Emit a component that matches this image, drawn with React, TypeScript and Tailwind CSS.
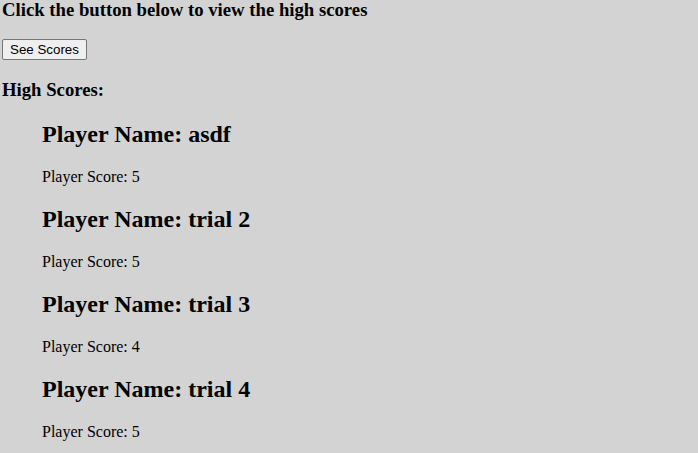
const players = [
  { name: "asdf", score: 5 },
  { name: "trial 2", score: 5 },
  { name: "trial 3", score: 4 },
  { name: "trial 4", score: 5 },
]

export default function App() {
  return (
    <div className="min-h-screen bg-[#d3d3d3] pl-[2px] font-['Liberation_Serif',serif] text-black flow-root">
      <h3 className="-mt-px mb-[15.7px] text-[18.72px] font-bold leading-[normal]">
        Click the button below to view the high scores
      </h3>
      <button className="h-[21px] rounded-[2px] border border-[#767676] bg-[#efefef] px-[7px] font-['Liberation_Sans',sans-serif] text-[13.33px] leading-none">
        See Scores
      </button>
      <h3 className="mt-[18.72px] text-[18.72px] font-bold leading-[normal]">High Scores:</h3>
      <ul className="pl-10">
        {players.map((p) => (
          <li key={p.name}>
            <h2 className="my-[19.92px] text-2xl font-bold leading-[normal]">Player Name: {p.name}</h2>
            <p className="my-4 text-base leading-[normal]">Player Score: {p.score}</p>
          </li>
        ))}
      </ul>
    </div>
  )
}
